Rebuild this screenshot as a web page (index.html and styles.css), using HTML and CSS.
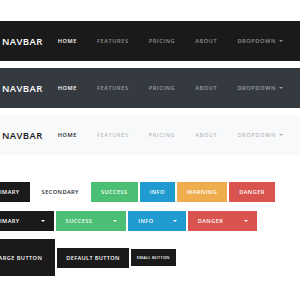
FILE: index.html
```html
<!DOCTYPE html>
<html>
<head>
<meta charset="utf-8">
<link rel="stylesheet" href="styles.css">
</head>
<body>
<div class="page">
  <nav class="navbar navbar-dark">
    <span class="brand">NAVBAR</span>
    <ul class="nav">
      <li class="active">HOME</li>
      <li>FEATURES</li>
      <li>PRICING</li>
      <li>ABOUT</li>
      <li>DROPDOWN<span class="caret"></span></li>
    </ul>
  </nav>
  <nav class="navbar navbar-gray">
    <span class="brand">NAVBAR</span>
    <ul class="nav">
      <li class="active">HOME</li>
      <li>FEATURES</li>
      <li>PRICING</li>
      <li>ABOUT</li>
      <li>DROPDOWN<span class="caret"></span></li>
    </ul>
  </nav>
  <nav class="navbar navbar-light">
    <span class="brand">NAVBAR</span>
    <ul class="nav">
      <li class="active">HOME</li>
      <li>FEATURES</li>
      <li>PRICING</li>
      <li>ABOUT</li>
      <li>DROPDOWN<span class="caret"></span></li>
    </ul>
  </nav>

  <div class="buttons">
    <div class="row">
      <button class="btn primary">PRIMARY</button>
      <button class="btn secondary">SECONDARY</button>
      <button class="btn success">SUCCESS</button>
      <button class="btn info">INFO</button>
      <button class="btn warning">WARNING</button>
      <button class="btn danger">DANGER</button>
    </div>
    <div class="row">
      <button class="btn primary dd">PRIMARY<span class="caret"></span></button>
      <button class="btn success dd">SUCCESS<span class="caret"></span></button>
      <button class="btn info dd dd-short">INFO<span class="caret"></span></button>
      <button class="btn danger dd">DANGER<span class="caret"></span></button>
    </div>
    <div class="row sizes">
      <button class="btn primary lg">LARGE BUTTON</button>
      <button class="btn primary default">DEFAULT BUTTON</button>
      <button class="btn primary sm">SMALL BUTTON</button>
    </div>
  </div>
</div>
</body>
</html>
```
FILE: styles.css
```css
html, body {
  margin: 0;
  padding: 0;
  background: #fff;
}
body {
  font-family: "Open Sans", "Liberation Sans", sans-serif;
  overflow: hidden;
}
.page {
  padding-top: 21px;
}
.navbar {
  height: 40px;
  display: flex;
  align-items: center;
  padding-left: 2px;
  margin-bottom: 7px;
}
.navbar-dark { background: #1a1a1a; }
.navbar-gray { background: #343a40; }
.navbar-light { background: #f8f9fa; }
.brand {
  font-size: 9.5px;
  font-weight: 600;
  letter-spacing: 0.4px;
  color: #fff;
  margin-right: 5px;
}
.navbar-light .brand { color: #1a1a1a; }
.nav {
  list-style: none;
  margin: 0;
  padding: 0;
  display: flex;
}
.nav li {
  font-size: 5.6px;
  font-weight: 600;
  letter-spacing: 0.6px;
  padding: 0 10px;
  color: rgba(255,255,255,0.5);
  display: flex;
  align-items: center;
  white-space: nowrap;
}
.navbar-dark .nav li.active,
.navbar-gray .nav li.active { color: #fff; }
.navbar-light .nav li { color: rgba(0,0,0,0.3); }
.navbar-light .nav li.active { color: #1a1a1a; }
.caret {
  display: inline-block;
  width: 0;
  height: 0;
  border-left: 2px solid transparent;
  border-right: 2px solid transparent;
  border-top: 2px solid currentColor;
  margin-left: 3px;
}
.buttons {
  margin-top: 27px;
  margin-left: -18px;
  display: flex;
  flex-direction: column;
  gap: 9px;
}
.row {
  display: flex;
  gap: 2px;
  align-items: center;
}
.sizes { gap: 2px; margin-top: -1px; }
.btn {
  font-family: inherit;
  font-size: 5.6px;
  font-weight: 600;
  letter-spacing: 0.45px;
  height: 20px;
  padding: 0 10px;
  border: 0;
  border-radius: 0;
  color: #fff;
  display: flex;
  align-items: center;
  white-space: nowrap;
}
.primary { background: #1a1a1a; }
.secondary { background: #fff; color: #1a1a1a; padding: 0 10px; }
.success { background: #4bbf73; }
.info { background: #1f9bcf; }
.warning { background: #f0ad4e; }
.danger { background: #d9534f; }
.dd .caret { margin-left: 21px; }
.dd.dd-short .caret { margin-left: 19px; }
.dd { padding-right: 9px; }
.lg { height: 37px; padding: 0 13px; }
.default { padding: 0 9px; letter-spacing: 0.35px; }
.sm { height: 17px; padding: 0 6px; font-size: 4px; letter-spacing: 0.2px; }
```
